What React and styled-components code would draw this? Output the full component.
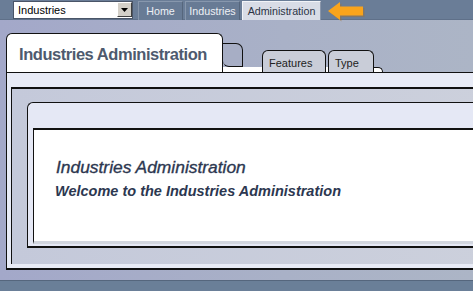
import React from 'react'
import styled, { createGlobalStyle } from 'styled-components'

const Global = createGlobalStyle`
    html, body {
        margin: 0;
        padding: 0;
        overflow: hidden;
    }
    body {
        font-family: "Liberation Sans", Arial, sans-serif;
        background: linear-gradient(90deg, #a3a8c9 0%, #a9b1c7 60%, #acb5c6 100%);
    }
`

const Page = styled.div`
    width: 473px;
    height: 291px;
    display: flex;
    flex-direction: column;
    overflow: hidden;
`

const TopBar = styled.div`
    height: 20px;
    display: flex;
    align-items: center;
    padding-left: 13px;
    background: #6a7d97;
    border-bottom: 1px solid #5f7089;
    box-sizing: border-box;
`

const Select = styled.div`
    width: 120px;
    height: 18px;
    box-sizing: border-box;
    background: #fff;
    border: 1px solid #4a5568;
    display: flex;
    align-items: center;
    justify-content: space-between;
    padding-left: 4px;
    font-size: 11px;
    color: #000;
`

const SelectButton = styled.div`
    width: 15px;
    height: 15px;
    background: #d4d0c8;
    border: 1px solid #fff;
    border-right-color: #404040;
    border-bottom-color: #404040;
    box-sizing: border-box;
    display: flex;
    align-items: center;
    justify-content: center;
`

const Nav = styled.div`
    display: flex;
    align-items: flex-end;
    gap: 2px;
    margin-left: 5px;
    height: 20px;
`

const NavButton = styled.div`
    width: ${p => p.w}px;
    height: 19px;
    box-sizing: border-box;
    display: flex;
    align-items: center;
    justify-content: center;
    font-size: 10.7px;
    background: ${p => (p.active ? '#d8dce6' : '#687b95')};
    color: ${p => (p.active ? '#2b3344' : '#eef1f6')};
    border: 1px solid ${p => (p.active ? '#f2f4f8' : '#8797ad')};
    border-right-color: ${p => (p.active ? '#8a96aa' : '#56667c')};
    border-bottom: none;
`

const Arrow = styled.svg`
    flex: none;
    margin-left: 7px;
    margin-top: 3px;
    overflow: visible;
`

const Main = styled.div`
    padding: 13px 0 0 6px;
    margin-right: -12px;
`

const TabRow = styled.div`
    height: 39px;
    display: flex;
    align-items: flex-end;
    background: linear-gradient(#fff, #fff) left bottom / 368px 5px no-repeat;
`

const MainTab = styled.div`
    width: 217px;
    height: 39px;
    box-sizing: border-box;
    background: #fff;
    border: 1px solid #111;
    border-bottom: none;
    border-radius: 6px 6px 0 0;
    padding: 11px 0 0 12px;
    font-size: 16.5px;
    font-weight: bold;
    letter-spacing: -0.45px;
    color: #4e5a6e;
`

const Stub = styled.div`
    width: 20px;
    height: 24px;
    margin-bottom: 5px;
    box-sizing: border-box;
    background: #a7aec5;
    border-top: 1px solid #111;
    border-right: 1.5px solid #111;
    border-bottom: 1px solid #111;
    border-radius: 0 7px 0 6px;
`

const Gap = styled.div`
    width: ${p => p.w}px;
`

const SideTab = styled.div`
    width: ${p => p.w}px;
    height: 22px;
    box-sizing: border-box;
    background: #c9cdd8;
    border: 1.5px solid #111;
    border-bottom: none;
    border-radius: 6px 6px 0 0;
    padding: 6px 0 0 6px;
    font-size: 11px;
    color: #222;
`

const TabEnd = styled.div`
    width: 9px;
    height: 5px;
    box-sizing: border-box;
    background: #fff;
    border-top: 1px solid #111;
    border-right: 1px solid #111;
    border-top-right-radius: 6px;
`

const Panel = styled.div`
    height: 198px;
    box-sizing: border-box;
    background: #e8ebf6;
    border-top: 1px solid #111;
    border-left: 1px solid #111;
    border-bottom: 2px solid #111;
    padding: 14px 0 4px 4px;
    display: flex;
`

const Inner = styled.div`
    flex: 1;
    box-sizing: border-box;
    background: linear-gradient(90deg, #c4c9da 0%, #ccd0dc 100%);
    border-top: 2px solid #111;
    border-left: 1px solid #111;
    padding: 13px 0 16px 15px;
    display: flex;
`

const Card = styled.div`
    flex: 1;
    box-sizing: border-box;
    background: #e5e8f5;
    border-top: 1px solid #111;
    border-left: 1px solid #111;
    border-bottom: 2px solid #111;
    border-top-left-radius: 6px;
    padding: 25px 0 2px 5px;
    display: flex;
`

const Body = styled.div`
    flex: 1;
    box-sizing: border-box;
    background: #fff;
    border-top: 2px solid #111;
    border-left: 1px solid #111;
    border-bottom: 3px solid #d2d6df;
    padding: 27px 0 0 22px;
`

const Title = styled.div`
    font-size: 17.4px;
    font-style: italic;
    color: #2c3750;
    -webkit-text-stroke: 0.35px #2c3750;
    line-height: 20px;
`

const Welcome = styled.div`
    margin-top: 5px;
    margin-left: -1px;
    font-size: 14.5px;
    font-weight: bold;
    font-style: italic;
    color: #2c3750;
    line-height: 18px;
`

const Footer = styled.div`
    margin-top: auto;
    height: 10px;
    background: #6a7f98;
    border-top: 1px solid #55667d;
`

export default function App() {
    return (
        <Page>
            <Global />
            <TopBar>
                <Select>
                    Industries
                    <SelectButton>
                        <svg width="7" height="4" viewBox="0 0 7 4">
                            <path d="M0 0h7L3.5 4z" fill="#000" />
                        </svg>
                    </SelectButton>
                </Select>
                <Nav>
                    <NavButton w={45}>Home</NavButton>
                    <NavButton w={55}>Industries</NavButton>
                    <NavButton w={79} active>Administration</NavButton>
                </Nav>
                <Arrow width="36" height="18" viewBox="0 0 36 18">
                    <path d="M0 9L12 0v4.5h23v9H12V18z" fill="#a86f24" opacity="0.4" transform="translate(1.5 1.5)" />
                    <path d="M0 9L12 0v4.5h23v9H12V18z" fill="#f9a41c" />
                </Arrow>
            </TopBar>
            <Main>
                <TabRow>
                    <MainTab>Industries Administration</MainTab>
                    <Stub />
                    <Gap w={19} />
                    <SideTab w={64}>Features</SideTab>
                    <Gap w={2} />
                    <SideTab w={46}>Type</SideTab>
                    <TabEnd />
                </TabRow>
                <Panel>
                    <Inner>
                        <Card>
                            <Body>
                                <Title>Industries Administration</Title>
                                <Welcome>Welcome to the Industries Administration</Welcome>
                            </Body>
                        </Card>
                    </Inner>
                </Panel>
            </Main>
            <Footer />
        </Page>
    )
}
